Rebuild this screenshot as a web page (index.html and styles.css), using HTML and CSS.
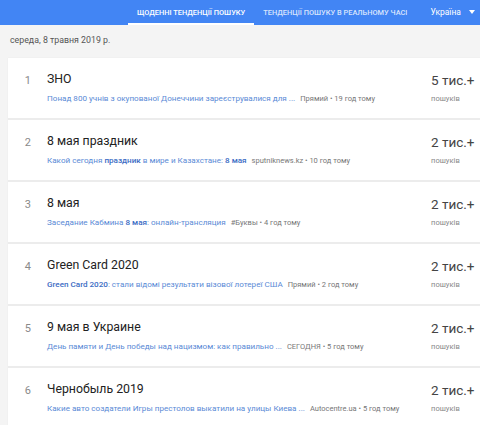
FILE: index.html
```html
<!DOCTYPE html>
<html>
<head>
<meta charset="utf-8">
<link rel="stylesheet" href="styles.css">
</head>
<body>
<header class="topbar">
  <nav class="tabs">
    <div class="tab active">ЩОДЕННІ ТЕНДЕНЦІЇ ПОШУКУ</div>
    <div class="tab">ТЕНДЕНЦІЇ ПОШУКУ В РЕАЛЬНОМУ ЧАСІ</div>
  </nav>
  <div class="geo">Україна <span class="caret"></span></div>
</header>
<div class="date">середа, 8 травня 2019 р.</div>
<div class="card">
  <div class="row">
    <div class="num">1</div>
    <div class="main">
      <div class="title">ЗНО</div>
      <div class="sub"><span class="link">Понад 800 учнів з окупованої Донеччини зареєструвалися для ...</span><span class="src">Прямий • 19 год тому</span></div>
    </div>
    <div class="count"><div class="big">5 тис.+</div><div class="small">пошуків</div></div>
  </div>
  <div class="row">
    <div class="num">2</div>
    <div class="main">
      <div class="title">8 мая праздник</div>
      <div class="sub"><span class="link">Какой сегодня <b>праздник</b> в мире и Казахстане: <b>8 мая</b></span><span class="src">sputniknews.kz • 10 год тому</span></div>
    </div>
    <div class="count"><div class="big">2 тис.+</div><div class="small">пошуків</div></div>
  </div>
  <div class="row">
    <div class="num">3</div>
    <div class="main">
      <div class="title">8 мая</div>
      <div class="sub"><span class="link">Заседание Кабмина <b>8 мая</b>: онлайн-трансляция</span><span class="src">#Буквы • 4 год тому</span></div>
    </div>
    <div class="count"><div class="big">2 тис.+</div><div class="small">пошуків</div></div>
  </div>
  <div class="row">
    <div class="num">4</div>
    <div class="main">
      <div class="title">Green Card 2020</div>
      <div class="sub"><span class="link"><b>Green Card 2020</b>: стали відомі результати візової лотереї США</span><span class="src">Прямий • 2 год тому</span></div>
    </div>
    <div class="count"><div class="big">2 тис.+</div><div class="small">пошуків</div></div>
  </div>
  <div class="row">
    <div class="num">5</div>
    <div class="main">
      <div class="title">9 мая в Украине</div>
      <div class="sub"><span class="link">День памяти и День победы над нацизмом: как правильно ...</span><span class="src">СЕГОДНЯ • 5 год тому</span></div>
    </div>
    <div class="count"><div class="big">2 тис.+</div><div class="small">пошуків</div></div>
  </div>
  <div class="row">
    <div class="num">6</div>
    <div class="main">
      <div class="title">Чернобыль 2019</div>
      <div class="sub"><span class="link">Какие авто создатели Игры престолов выкатили на улицы Киева ...</span><span class="src">Autocentre.ua • 5 год тому</span></div>
    </div>
    <div class="count"><div class="big">2 тис.+</div><div class="small">пошуків</div></div>
  </div>
</div>
</body>
</html>
```
FILE: styles.css
```css
html, body {
  margin: 0;
  padding: 0;
}
body {
  background: #f4f4f4;
  font-family: Roboto, "Liberation Sans", Arial, sans-serif;
  width: 480px;
  height: 425px;
  overflow: hidden;
}
.topbar {
  height: 25px;
  background: #4285f4;
  display: flex;
  align-items: stretch;
  color: #fff;
}
.tabs {
  display: flex;
  margin-left: 128px;
}
.tab {
  font-size: 7.4px;
  font-weight: 500;
  padding: 1px 9px 0;
  display: flex;
  align-items: center;
  color: rgba(255,255,255,0.8);
  box-sizing: border-box;
  border-bottom: 2px solid transparent;
}
.tab.active {
  color: #fff;
  border-bottom-color: #fff;
}
.geo {
  margin-left: auto;
  margin-right: 5px;
  font-size: 8.5px;
  display: flex;
  align-items: center;
  gap: 8px;
  color: #fff;
  padding-bottom: 1px;
}
.caret {
  width: 0;
  height: 0;
  border-left: 3px solid transparent;
  border-right: 3px solid transparent;
  border-top: 4px solid #fff;
}
.date {
  font-size: 8.8px;
  color: #555;
  padding: 10px 0 0 10px;
  height: 23px;
}
.card {
  margin-left: 8px;
  background: #fff;
  box-shadow: 0 0 1px rgba(0,0,0,0.08);
}
.row {
  display: flex;
  height: 62px;
  box-sizing: border-box;
  border-bottom: 2px solid #ececec;
  padding-top: 14px;
}
.num {
  width: 23px;
  margin-right: 16px;
  text-align: right;
  font-size: 11px;
  color: #8a8a8a;
  flex: none;
  padding-top: 2px;
}
.main {
  flex: 1;
  min-width: 0;
}
.title {
  font-size: 12.3px;
  color: #222;
  line-height: 15px;
}
.sub {
  margin-top: 6px;
  font-size: 8.1px;
  line-height: 10px;
  white-space: nowrap;
}
.link {
  color: #5a8ad6;
}
.link b {
  color: #3b6cc4;
  font-weight: 500;
}
.src {
  color: #777;
  margin-left: 5px;
  font-size: 7.5px;
}
.count {
  width: 49px;
  flex: none;
}
.big {
  font-size: 13.5px;
  color: #444;
  line-height: 16px;
}
.small {
  margin-top: 6px;
  font-size: 7.6px;
  color: #888;
  line-height: 10px;
}
```
